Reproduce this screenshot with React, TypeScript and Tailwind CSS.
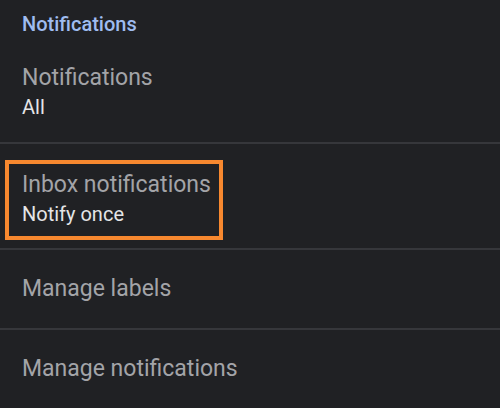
import React from "react";

const Divider = () => <div className="h-[2px] w-full bg-[#36373b]" />;

const App = () => {
  return (
    <div
      className="h-[408px] w-[500px] overflow-hidden bg-[#202124]"
      style={{ fontFamily: "Roboto, 'Noto Sans', sans-serif" }}
    >
      <div className="pl-[22px] pt-3">
        <h2 className="text-[20px] leading-[24px] font-medium text-[#9fbcf0]">Notifications</h2>
      </div>

      <div className="pl-[22px] pt-[28px] pb-[20px]">
        <p className="text-[23px] leading-[28px] text-[#a3a4a8]">Notifications</p>
        <p className="text-[20px] leading-[30px] text-[#e4e5e7]">All</p>
      </div>
      <Divider />

      <div className="px-[5px] pt-4 pb-2">
        <div className="w-[218px] border-4 border-[#f7882f] pl-[13px] py-[7px]">
          <p className="text-[23px] leading-[28px] text-[#a3a4a8]">Inbox notifications</p>
          <p className="text-[20px] leading-[30px] text-[#e4e5e7]">Notify once</p>
        </div>
      </div>
      <Divider />

      <div className="pl-[22px] py-[25px]">
        <p className="text-[23px] leading-[28px] text-[#a3a4a8]">Manage labels</p>
      </div>
      <Divider />

      <div className="pl-[22px] py-[25px]">
        <p className="text-[23px] leading-[28px] text-[#a3a4a8]">Manage notifications</p>
      </div>
    </div>
  );
};

export default App;
